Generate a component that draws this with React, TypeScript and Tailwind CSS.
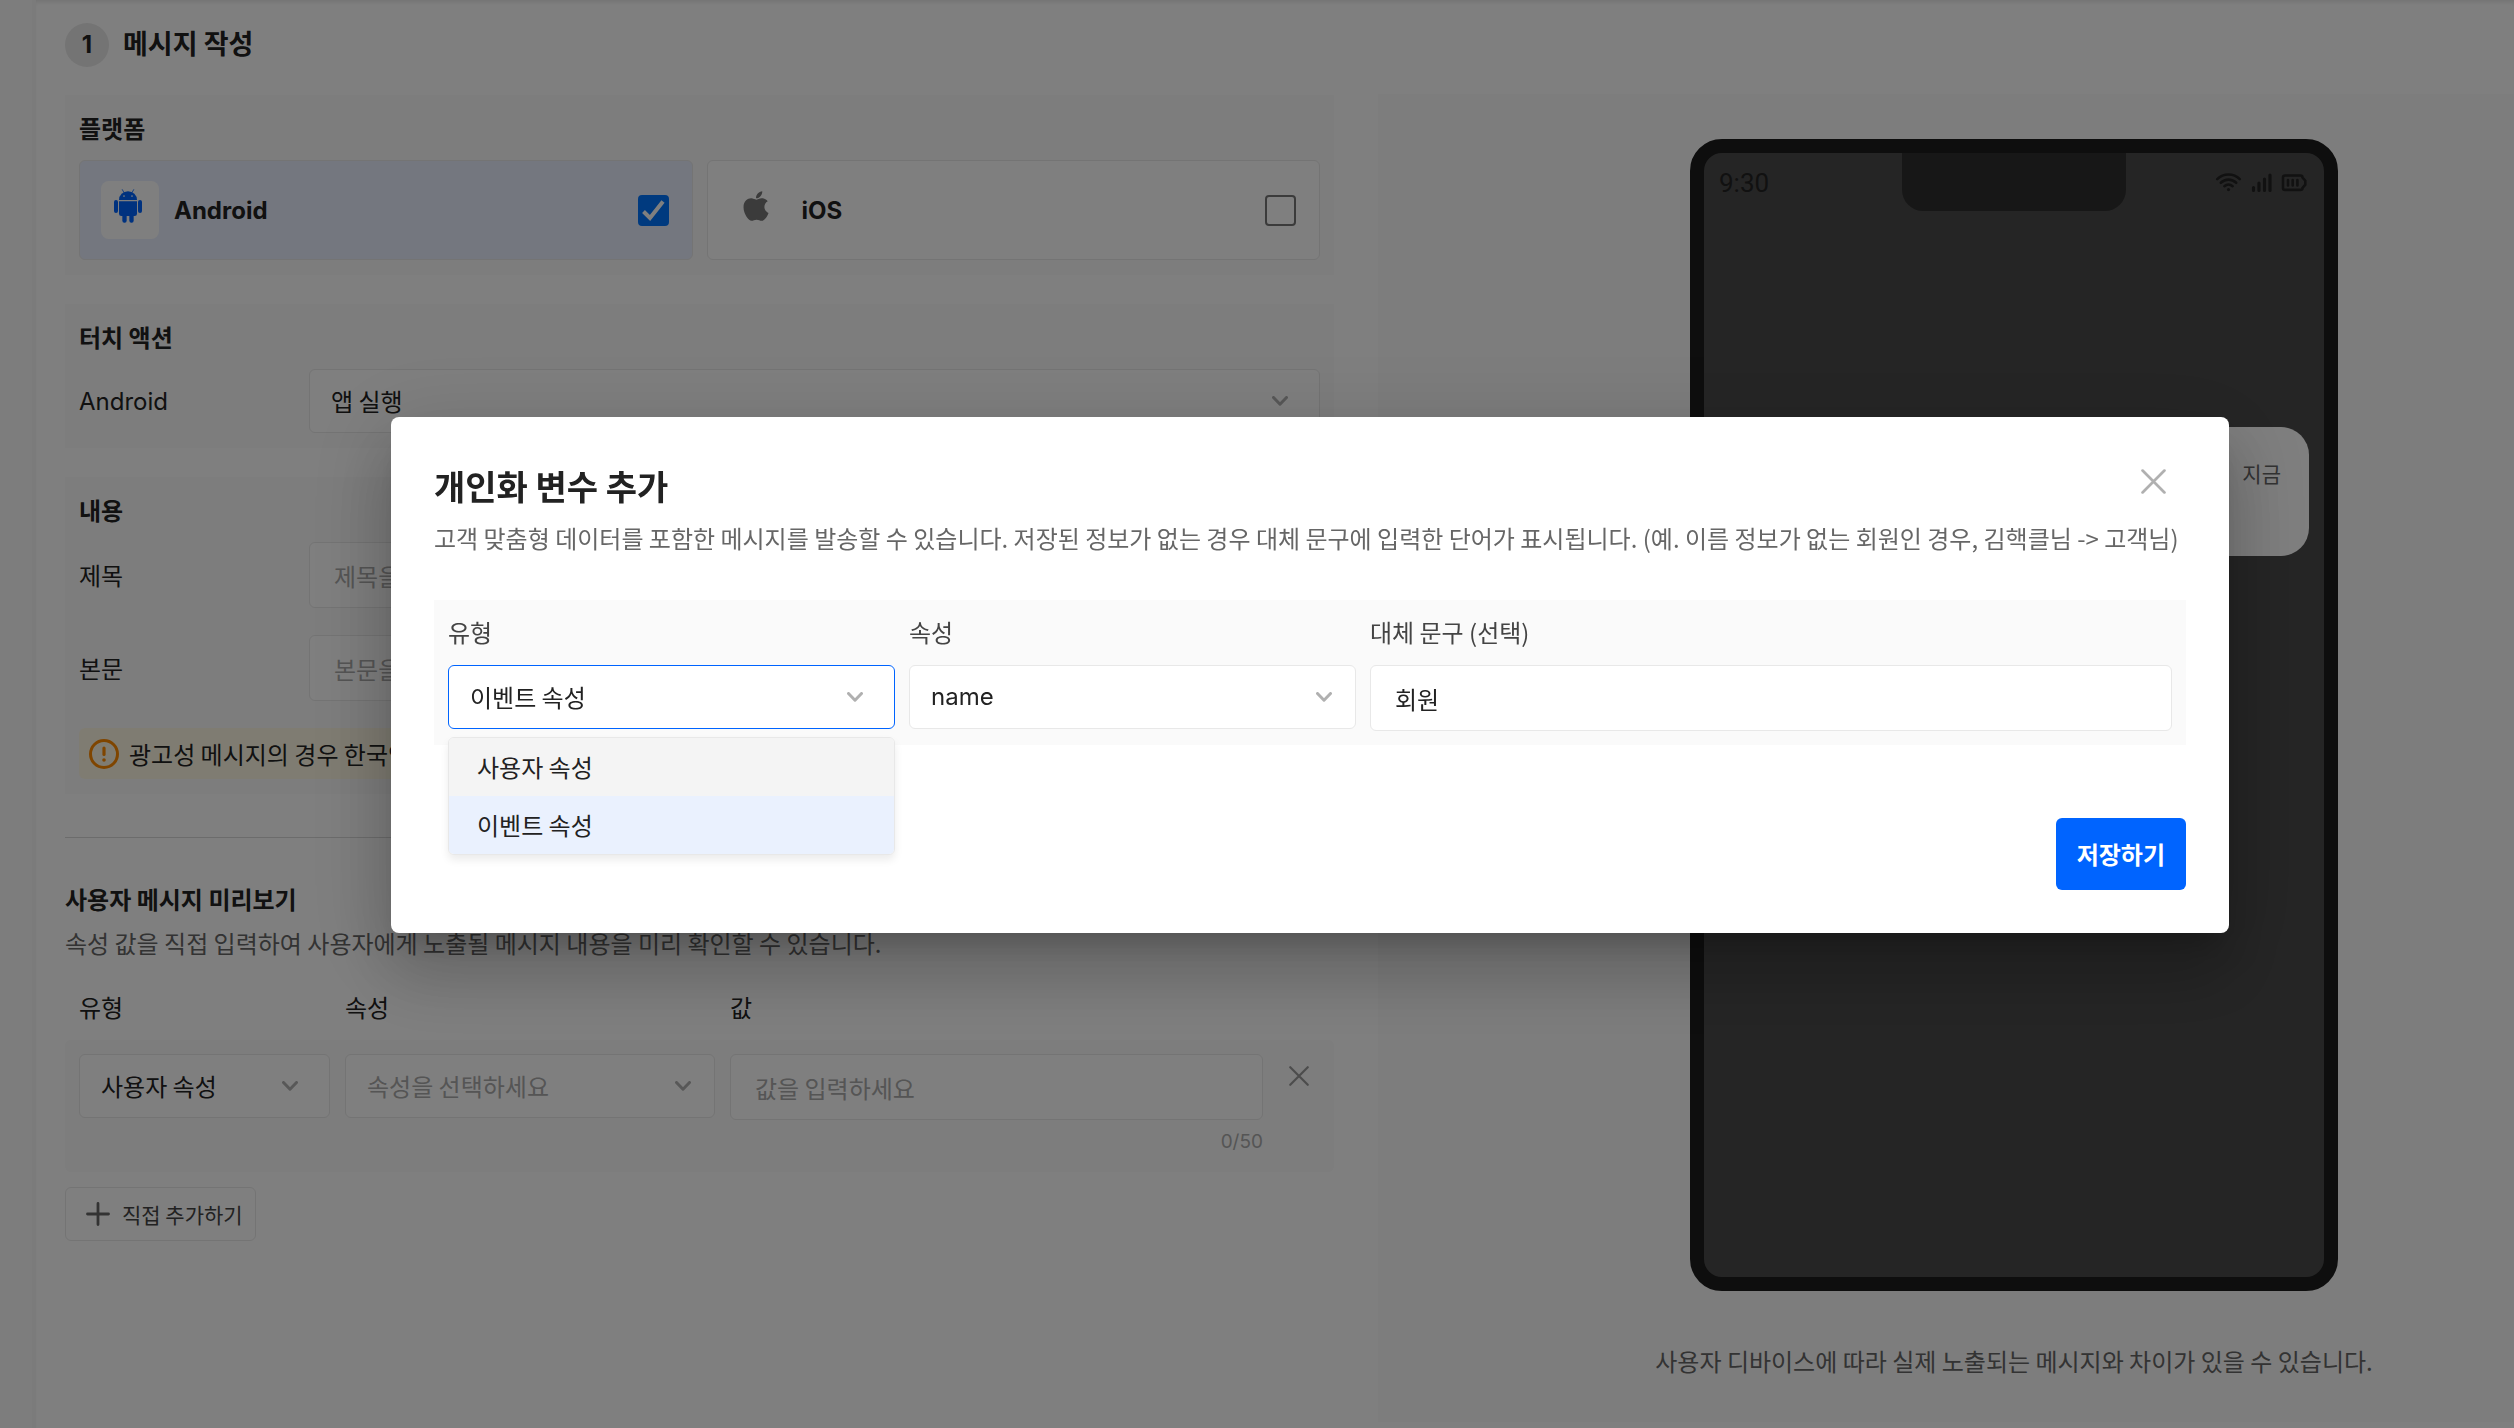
import React from 'react';
import clsx from 'clsx';
import { FaApple } from 'react-icons/fa';

const typeOptions = ['사용자 속성', '이벤트 속성'];

const AndroidIcon: React.FC = () => (
  <svg viewBox="159 120 84 102" className="w-7 h-[34px]" fill="#0064ff">
    <path d="M174 153a27 26 0 0 1 54 0z" />
    <path d="M184 122l5 9M218 122l-5 9" stroke="#0064ff" strokeWidth="2.5" strokeLinecap="round" />
    <path d="M174 157h54v37a7 7 0 0 1-7 7h-40a7 7 0 0 1-7-7z" />
    <rect x="159" y="153" width="12" height="39" rx="6" />
    <rect x="231" y="153" width="12" height="39" rx="6" />
    <rect x="184" y="190" width="13" height="31" rx="6" />
    <rect x="205" y="190" width="13" height="31" rx="6" />
    <circle cx="189" cy="141" r="2.6" fill="#fff" />
    <circle cx="213" cy="141" r="2.6" fill="#fff" />
  </svg>
);

const CloseIcon: React.FC<{ className?: string }> = ({ className }) => (
  <svg viewBox="0 0 24 24" className={className} fill="none" stroke="currentColor" strokeWidth="2.6" strokeLinecap="round">
    <path d="M1.5 1.5l21 21M22.5 1.5l-21 21" />
  </svg>
);

const ChevronIcon: React.FC<{ className?: string }> = ({ className }) => (
  <svg
    viewBox="0 0 16 10"
    className={clsx('absolute top-1/2 -translate-y-1/2 w-4 h-2.5 text-[#b0b0b0] pointer-events-none', className)}
    fill="none"
    stroke="currentColor"
    strokeWidth="3"
    strokeLinecap="round"
    strokeLinejoin="round"
  >
    <path d="M1.5 1.5L8 8.2l6.5-6.7" />
  </svg>
);

const StatusIcons: React.FC = () => (
  <svg viewBox="0 0 92 22" className="w-[92px] h-[22px]" fill="none" stroke="#222" strokeWidth="2.6" strokeLinecap="round">
    {/* Wifi */}
    <path d="M2.2 7.2a16 16 0 0 1 22.6 0M5.8 10.8a11 11 0 0 1 15.4 0M9.4 14.2a6 6 0 0 1 8.2 0" />
    <circle cx="13.5" cy="17.6" r="1.6" fill="#222" stroke="none" />
    {/* Signal */}
    <path d="M38.5 15.5v3M44 11v7.5M49.5 7v11.5M55 3v15.5" strokeWidth="3.2" />
    {/* Battery */}
    <path d="M70 3.5h15.500a2 2 0 0 1 2 2l2.800 3.200v4l-2.800 3.200a2 2 0 0 1-2 2H70a2 2 0 0 1-2-2V5.500a2 2 0 0 1 2-2z" />
    <path d="M73 8v5.500M77.700 8v5.500M82.400 8v5.500" />
  </svg>
);

interface SelectBoxProps {
  id: string;
  value: string;
  options?: string[];
  placeholder?: boolean;
  active?: boolean;
  chevronClass?: string;
  className?: string;
}

const SelectBox: React.FC<SelectBoxProps> = ({
  id,
  value,
  options,
  placeholder,
  active,
  chevronClass = 'right-8',
  className,
}) => (
  <div className={clsx('relative', className)}>
    <select
      id={id}
      defaultValue={value}
      className={clsx(
        'block w-full h-16 pl-[21px] pr-14 appearance-none rounded-md border bg-white outline-none',
        active ? 'border-[#0064ff]' : 'border-[#e8e8e8]',
        placeholder ? 'text-[#aaa]' : 'text-[#222]'
      )}
    >
      {(options ?? [value]).map(option => (
        <option key={option}>{option}</option>
      ))}
    </select>
    <ChevronIcon className={chevronClass} />
  </div>
);

const inputClass =
  'block w-full h-[66px] px-6 rounded-md border border-[#e8e8e8] bg-white text-[#222] placeholder:text-[#aaa] outline-none';

const Panel: React.FC<{ title: string; children: React.ReactNode }> = ({ title, children }) => (
  <section className="mb-[29px] px-3.5 py-[15px] bg-[#fafafa]">
    <h3 className="mb-3.5 font-bold">{title}</h3>
    {children}
  </section>
);

interface PlatformOptionProps {
  name: string;
  icon: React.ReactNode;
  checked?: boolean;
}

const PlatformOption: React.FC<PlatformOptionProps> = ({ name, icon, checked }) => (
  <label
    className={clsx(
      'flex flex-1 items-center h-[100px] pl-[21px] pr-[23px] rounded-md border border-[#e8e8e8]',
      checked ? 'bg-[#e9efff]' : 'bg-white'
    )}
  >
    <span className="flex items-start justify-center w-[58px] h-[58px] pt-2 pr-1 rounded-lg bg-white">{icon}</span>
    <span className="ml-[15px] font-bold">
      <span className="font-[Inter]">{name}</span>
    </span>
    <span className="relative ml-auto">
      <input
        type="checkbox"
        defaultChecked={checked}
        className="peer block w-[31px] h-[31px] appearance-none rounded border-2 border-[#767676] bg-white checked:border-[#0075ff] checked:bg-[#0075ff]"
      />
      <svg
        viewBox="0 0 31 31"
        className="absolute inset-0 hidden peer-checked:block pointer-events-none"
        fill="none"
        stroke="#fff"
        strokeWidth="4"
      >
        <path d="M5.5 16.500l6.500 6.500L25 6.500" />
      </svg>
    </span>
  </label>
);

const MessageForm: React.FC = () => (
  <div>
    <header className="flex items-start gap-3.5 mb-7">
      <span className="flex items-center justify-center w-11 h-11 rounded-full bg-[#e8e8e8] font-[Inter] font-bold">
        1
      </span>
      <h2 className="text-[27px] leading-10 font-bold">메시지 작성</h2>
    </header>

    <Panel title="플랫폼">
      <div className="flex gap-3.5">
        <PlatformOption name="Android" icon={<AndroidIcon />} checked />
        <PlatformOption name="iOS" icon={<FaApple className="w-[34px] h-[34px] text-[#767676]" />} />
      </div>
    </Panel>

    <Panel title="터치 액션">
      <div className="flex items-center">
        <label htmlFor="touch-action" className="w-[230px]">
          <span className="font-[Inter]">Android</span>
        </label>
        <SelectBox id="touch-action" value="앱 실행" className="flex-1" />
      </div>
    </Panel>

    <section className="px-3.5 py-[15px] bg-[#fafafa]">
      <h3 className="mb-3.5 font-bold">내용</h3>
      <div className="flex flex-col gap-[27px]">
        <div className="flex items-center">
          <label htmlFor="title" className="w-[230px]">
            제목
          </label>
          <div className="flex-1">
            <input id="title" placeholder="제목을 입력하세요" className={inputClass} />
          </div>
        </div>
        <div className="flex items-center">
          <label htmlFor="body" className="w-[230px]">
            본문
          </label>
          <div className="flex-1">
            <input id="body" placeholder="본문을 입력하세요" className={inputClass} />
          </div>
        </div>
        <p className="flex items-center gap-[9px] h-[51px] px-[9px] rounded-md bg-[#fff9e5]">
          <svg viewBox="0 0 32 32" className="w-8 h-8" fill="none" stroke="#ff8a00" strokeWidth="3" strokeLinecap="round">
            <circle cx="16" cy="16" r="13.500" />
            <path d="M16 10v6.500" strokeWidth="3.200" />
            <circle cx="16" cy="22" r="1.800" fill="#ff8a00" stroke="none" />
          </svg>
          광고성 메시지의 경우 한국인터넷진흥원 가이드를 준수해 주세요.
        </p>
      </div>
    </section>

    <hr className="my-[43px] border-[#d9d9d9]" />

    {/* Preview values */}
    <h3 className="mb-2 font-bold">사용자 메시지 미리보기</h3>
    <p className="text-[#666]">속성 값을 직접 입력하여 사용자에게 노출될 메시지 내용을 미리 확인할 수 있습니다.</p>
    <div className="flex gap-[15px] mt-7 mb-[15px] px-3.5">
      <label htmlFor="preview-type" className="w-[251px]">
        유형
      </label>
      <label htmlFor="preview-key" className="w-[370px]">
        속성
      </label>
      <label htmlFor="preview-value">값</label>
    </div>
    <div className="flex items-start gap-[15px] px-3.5 pt-3.5 pb-4 rounded-md bg-[#fafafa]">
      <SelectBox id="preview-type" value="사용자 속성" options={typeOptions} className="w-[251px]" />
      <SelectBox
        id="preview-key"
        value="속성을 선택하세요"
        placeholder
        chevronClass="right-6"
        className="w-[370px]"
      />
      <div className="flex-1">
        <input id="preview-value" placeholder="값을 입력하세요" className={inputClass} />
        <p className="mt-2 text-right font-[Inter] text-[19px] leading-7 text-[#aaa]">0/50</p>
      </div>
      <button type="button" aria-label="삭제" className="flex items-center justify-center w-[42px] h-11">
        <CloseIcon className="w-5 h-5 text-[#999]" />
      </button>
    </div>
    <button
      type="button"
      className="flex items-center gap-3 h-[54px] mt-[15px] pl-5 pr-3 rounded-md border border-[#e8e8e8] text-[21px] text-[#444]"
    >
      <svg viewBox="0 0 24 24" className="w-6 h-6" stroke="#666" strokeWidth="2.800" strokeLinecap="round">
        <path d="M12 1.500v21M1.500 12h21" />
      </svg>
      직접 추가하기
    </button>
  </div>
);

const PhonePreview: React.FC = () => (
  <aside className="flex flex-col items-center mt-[71px] pt-[45px] pb-[43px] pl-[136px] bg-[#fafafa]">
    <div className="relative w-[648px] h-[1152px] border-14 border-[#1c1c1c] rounded-[32px] bg-[#4b4b4b]">
      <div className="absolute top-0 left-1/2 -translate-x-1/2 w-56 h-[58px] rounded-b-[21px] bg-[#2f2f2f]" />
      <div className="flex items-center justify-between pt-3 pl-[15px] pr-[17px]">
        <span className="font-[Roboto] text-[26px] text-[#222]">9:30</span>
        <StatusIcons />
      </div>
      <div className="flex justify-end h-[129px] mt-[226px] mx-[15px] px-7 py-7 rounded-[28px] bg-white text-[21px] text-[#666]">
        <span>지금</span>
      </div>
    </div>
    <p className="mt-[52px] text-[#666]">사용자 디바이스에 따라 실제 노출되는 메시지와 차이가 있을 수 있습니다.</p>
  </aside>
);

const VariableDialog: React.FC = () => (
  <div
    role="dialog"
    aria-modal="true"
    aria-labelledby="dialog-title"
    className="w-[1838px] max-w-full p-[43px] rounded-lg bg-white shadow-[0_20px_27px_-13px_rgba(0,0,0,0.2),0_43px_68px_5px_rgba(0,0,0,0.14),0_16px_83px_14px_rgba(0,0,0,0.12)]"
  >
    <header className="flex items-start justify-between">
      <h1 id="dialog-title" className="text-[34px] leading-[52px] font-bold">
        개인화 변수 추가
      </h1>
      <button type="button" aria-label="닫기" className="flex items-center justify-center w-[66px] h-[42px]">
        <CloseIcon className="w-[25px] h-[25px] text-[#b0b0b0]" />
      </button>
    </header>
    <p className="mt-2 text-[#666] whitespace-nowrap">
      고객 맞춤형 데이터를 포함한 메시지를 발송할 수 있습니다. 저장된 정보가 없는 경우 대체 문구에 입력한 단어가
      표시됩니다. (예. 이름 정보가 없는 회원인 경우, 김핵클님 -&gt; 고객님)
    </p>

    <div className="flex gap-3.5 mt-11 p-3.5 bg-[#fafafa] text-[#444]">
      <div className="relative w-[447px]">
        <label htmlFor="variable-type" className="block mb-[15px]">
          유형
        </label>
        <SelectBox id="variable-type" value="이벤트 속성" options={typeOptions} active />
        <ul
          role="listbox"
          aria-label="유형"
          className="absolute top-full left-0 w-full mt-1.5 rounded-md border border-[#e8e8e8] bg-white text-[#222] shadow-[0_5px_9px_rgba(0,0,0,0.08)] overflow-hidden"
        >
          {typeOptions.map(option => (
            <li
              key={option}
              role="option"
              aria-selected={option === '이벤트 속성'}
              className={clsx(
                'h-[58px] pl-7 leading-[58px]',
                option === '이벤트 속성' ? 'bg-[#eaf1fe]' : 'bg-[#f4f4f4]'
              )}
            >
              {option}
            </li>
          ))}
        </ul>
      </div>
      <div className="w-[447px]">
        <label htmlFor="variable-key" className="block mb-[15px]">
          속성
        </label>
        <SelectBox id="variable-key" value="name" chevronClass="right-6" className="font-[Inter]" />
      </div>
      <div className="flex-1">
        <label htmlFor="variable-fallback" className="block mb-[15px]">
          대체 문구 (선택)
        </label>
        <input id="variable-fallback" defaultValue="회원" className={inputClass} />
      </div>
    </div>

    <footer className="flex justify-end mt-[73px]">
      <button type="button" className="h-[72px] px-[21px] rounded-md bg-[#0064ff] text-white font-bold">
        저장하기
      </button>
    </footer>
  </div>
);

const App: React.FC = () => {
  return (
    <div className="flex min-h-screen overflow-hidden bg-white font-['Noto_Sans_CJK_KR',sans-serif] text-2xl leading-9 text-[#222]">
      <div className="w-9 shrink-0 border-r-4 border-[#f7f7f7] bg-[#fafafa]" />
      <main className="grid grid-cols-[1269fr_1136fr] gap-11 flex-1 items-start pt-[23px] pl-[29px] shadow-[inset_0_4px_4px_-2px_rgba(0,0,0,0.1)]">
        <MessageForm />
        <PhonePreview />
      </main>

      {/* Dialog backdrop */}
      <div className="fixed inset-0 flex items-start justify-center pt-[417px] pl-[106px] bg-black/50">
        <VariableDialog />
      </div>
    </div>
  );
};

export default App;
